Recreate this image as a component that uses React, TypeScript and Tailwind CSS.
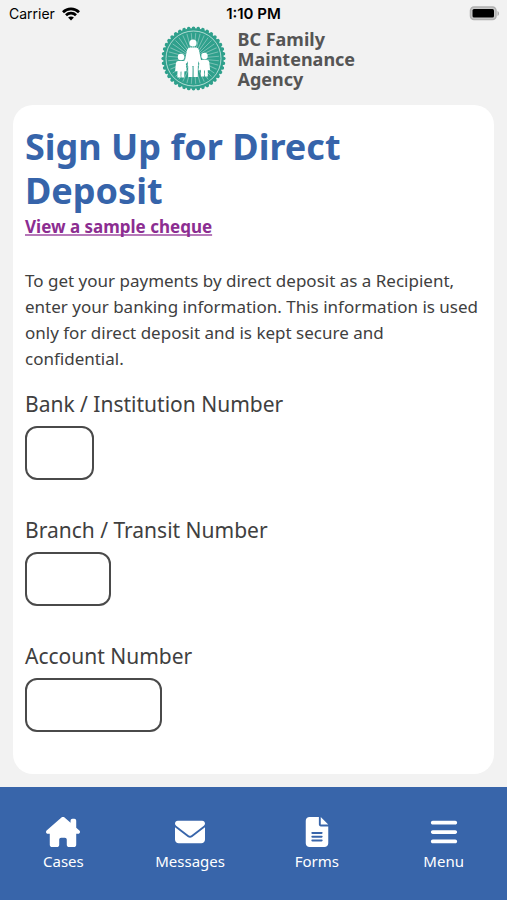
import { FaBars, FaEnvelope, FaFileLines, FaHouseChimney } from "react-icons/fa6";

const fields = [
  { id: "bank", label: "Bank / Institution Number", width: "w-[69px]" },
  { id: "branch", label: "Branch / Transit Number", width: "w-[86px]" },
  { id: "account", label: "Account Number", width: "w-[137px]" },
];

const tabs = [
  { label: "Cases", icon: FaHouseChimney, size: 34 },
  { label: "Messages", icon: FaEnvelope, size: 30 },
  { label: "Forms", icon: FaFileLines, size: 30 },
  { label: "Menu", icon: FaBars, size: 30 },
];

const teeth = Array.from({ length: 40 }, (_, i) => i * 9);
const rays = Array.from({ length: 36 }, (_, i) => i * 10 + 5);

function StatusBar() {
  return (
    <div className="grid h-[26px] grid-cols-3 items-center px-2 pt-px font-['Inter','Liberation_Sans',sans-serif] text-sm leading-5 text-black">
      <div className="flex items-center gap-[7px] pl-px">
        <span>Carrier</span>
        <svg width="18" height="14" viewBox="0 0 18 14" aria-hidden="true">
          <g fill="none" stroke="#000" strokeWidth="2.7">
            <path d="M1 5.2C5.5 .7 12.5 .7 17 5.2" />
            <path d="M4 8.3C6.8 5.5 11.2 5.5 14 8.3" />
          </g>
          <path d="M9 13.6 6.1 10.5c1.6-1.5 4.2-1.5 5.8 0z" />
        </svg>
      </div>
      <span className="text-center text-[15px] font-semibold">1:10 PM</span>
      <svg
        className="justify-self-end"
        width="30"
        height="15"
        viewBox="0 0 30 15"
        aria-hidden="true"
      >
        <rect x="1.500" y="1" width="25.500" height="12.500" rx="3.500" fill="#c8c8c8" stroke="#b0b0b0" strokeWidth="1.5" />
        <rect x="3.500" y="3" width="21.500" height="8.500" rx="1.5" fill="#000" />
        <path d="M28.500 5c2 1 2 4 0 5z" fill="#aaa" />
      </svg>
    </div>
  );
}

function Child({ x, y }: { x: number; y: number }) {
  return (
    <g transform={`translate(${x} ${y})`}>
      <circle cx="0" cy="0" r="3.2" />
      <path d="M-2.500 4h5q2 0 2.300 2.200l.8 8h-2l-.3-2V20.500H.4v-6h-.8v6h-3.200v-8.300l-.3 2h-2l.8-8q.3-2.200 2.300-2.200z" />
      <path d="M-3.200 7h6.400l.8 7h-8z" />
    </g>
  );
}

function Logo() {
  return (
    <svg width="65" height="65" viewBox="0 0 65 65" aria-hidden="true">
      <g fill="#2fa08c">
        <circle cx="32.5" cy="32.5" r="30.3" />
        {teeth.map((angle) => (
          <circle
            key={angle}
            cx="32.5"
            cy="2.2"
            r="1.8"
            transform={`rotate(${angle} 32.5 32.5)`}
          />
        ))}
      </g>
      <circle cx="32.5" cy="32.5" r="27.5" fill="none" stroke="#b0dbd3" strokeWidth="1" />
      <g stroke="#7cc1b5" strokeWidth=".9">
        {rays.map((angle) => (
          <path key={angle} d="M32.5 24V7" transform={`rotate(${angle} 32.5 32.5)`} />
        ))}
      </g>
      <g fill="#fff">
        <circle cx="32" cy="17" r="3.6" />
        <path d="M29 21.500h6q2.400 0 3 2.800l2 9.700 4 4-1.800 1.800-4.600-3.400-.8-2V51h-4.200V39h-1.200v12h-4.200V34.400l-.8 2-4.600 3.400L20 38l4-4 2-9.700q.6-2.800 3-2.800z" />
        <path d="M27.500 25h9l.8 15H26.700z" />
        <Child x={20} y={31} />
        <Child x={43.5} y={30} />
      </g>
    </svg>
  );
}

export default function App() {
  return (
    <div className="flex min-h-screen flex-col bg-[#f2f2f2] font-['Noto_Sans',sans-serif] text-[#404040]">
      <StatusBar />

      <header className="flex items-start justify-center gap-3 pl-[11px]">
        <Logo />
        <p className="w-[120px] pt-[3px] text-[18px] leading-5 font-bold text-[#555]">
          BC Family Maintenance Agency
        </p>
      </header>

      <main className="mx-[13px] mt-[14px] mb-[13px] flex-1 rounded-[20px] bg-white px-3 pt-5">
        <h1 className="text-[36px] leading-11 font-bold text-[#3664aa]">
          Sign Up for Direct Deposit
        </h1>
        <a
          href="#sample-cheque"
          className="block w-fit text-[17px] leading-7 font-bold text-[#8c2d91] underline decoration-[#b678b9] decoration-2 underline-offset-1 [text-decoration-skip-ink:none]"
        >
          View a sample cheque
        </a>
        <p className="mt-[27px] text-[17px] leading-[26px]">
          To get your payments by direct deposit as a Recipient, enter your
          banking information. This information is used only for direct deposit
          and is kept secure and confidential.
        </p>

        <form className="mt-4 flex flex-col gap-[34px]">
          {fields.map((field) => (
            <div key={field.id} className="flex flex-col gap-1.5">
              <label htmlFor={field.id} className="text-[21px] leading-8">
                {field.label}
              </label>
              <input
                id={field.id}
                type="text"
                inputMode="numeric"
                className={`h-[54px] rounded-xl border-2 border-[#4a4a4a] bg-white px-3 text-lg ${field.width}`}
              />
            </div>
          ))}
        </form>
      </main>

      <nav className="grid h-[113px] grid-cols-4 bg-[#3865aa] pt-7 text-white">
        {tabs.map(({ label, icon: Icon, size }) => (
          <a key={label} href={`#${label.toLowerCase()}`} className="flex flex-col items-center gap-0.5">
            <span className="flex h-[34px] items-center">
              <Icon size={size} aria-hidden="true" />
            </span>
            <span className="text-[15px] leading-5">{label}</span>
          </a>
        ))}
      </nav>
    </div>
  );
}
